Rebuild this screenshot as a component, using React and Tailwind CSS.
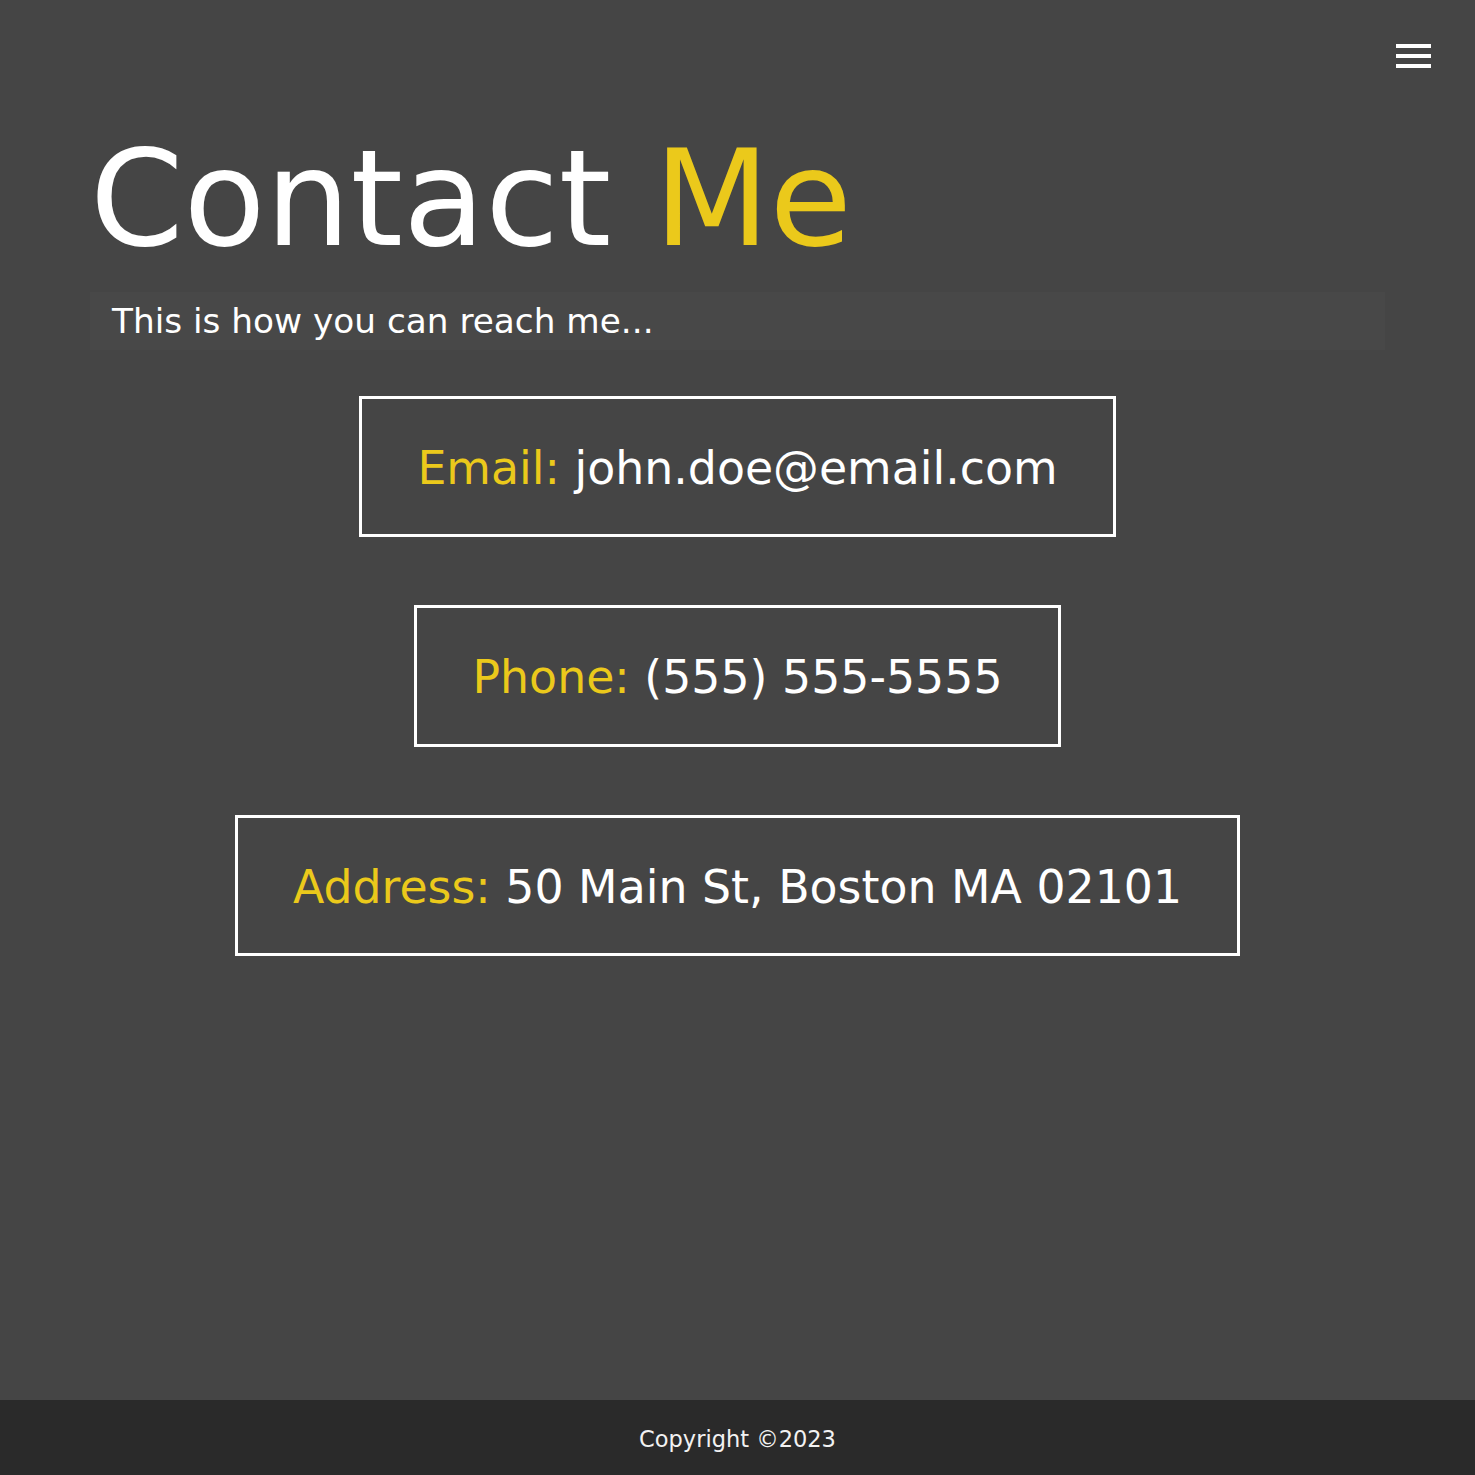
const contacts = [
  { label: "Email:", value: "john.doe@email.com" },
  { label: "Phone:", value: "(555) 555-5555" },
  { label: "Address:", value: "50 Main St, Boston MA 02101" },
];

function MenuButton() {
  return (
    <button type="button" className="flex w-[35px] flex-col gap-[6px]" aria-label="Menu">
      <span className="h-[4px] w-full bg-white" />
      <span className="h-[4px] w-full bg-white" />
      <span className="h-[4px] w-full bg-white" />
    </button>
  );
}

export default function App() {
  return (
    <div
      className="flex min-h-[1475px] flex-col bg-[#454545] text-white"
      style={{ fontFamily: '"DejaVu Sans", Verdana, sans-serif' }}
    >
      <header className="flex justify-end pr-[44px] pt-[44px]">
        <MenuButton />
      </header>

      <main className="flex-1 px-[90px]">
        <h1 className="mt-[54px] text-[134px] leading-[1.164] font-normal">
          Contact <span className="text-[#ebc91b]">Me</span>
        </h1>

        <p className="mt-[14px] bg-[#484848] px-[22px] py-[9px] text-[34.3px] leading-[40px]">
          This is how you can reach me...
        </p>

        <div className="mt-[46px] flex flex-col items-center gap-[68px]">
          {contacts.map((item) => (
            <div
              key={item.label}
              className="border-[3px] border-white px-[55px] pt-[43px] pb-[39px] text-[45.8px] leading-[1.164]"
            >
              <span className="text-[#ebc91b]">{item.label}</span> {item.value}
            </div>
          ))}
        </div>
      </main>

      <footer className="flex h-[75px] items-center justify-center bg-[#2a2a2a] pt-[4px] text-[22.5px] text-[#f2f2f2]">
        Copyright ©2023
      </footer>
    </div>
  );
}
